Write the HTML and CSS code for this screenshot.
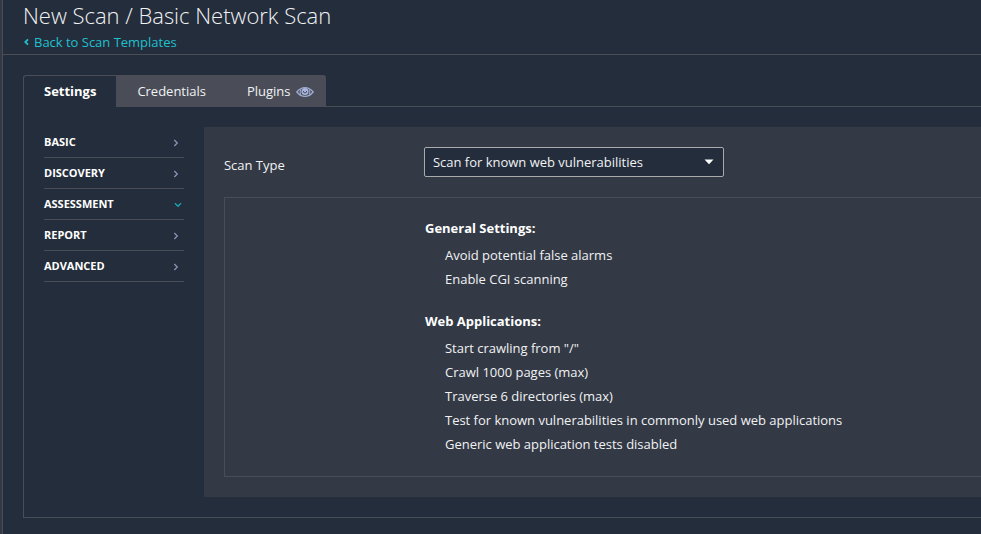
FILE: index.html
```html
<!DOCTYPE html>
<html lang="en">
<head>
<meta charset="utf-8">
<title>New Scan / Basic Network Scan</title>
<link rel="stylesheet" href="styles.css">
</head>
<body>
<div class="page">
  <header class="header">
    <h1>New Scan / Basic Network Scan</h1>
    <a class="back"><svg width="6" height="8" viewBox="0 0 6 8"><path d="M5 1.300 2.300 4l2.700 2.700"/></svg>Back to Scan Templates</a>
  </header>
  <main class="content">
    <nav class="tabs">
      <a class="tab active">Settings</a>
      <a class="tab credentials">Credentials</a>
      <a class="tab plugins">Plugins
        <svg class="eye" width="18" height="12" viewBox="0 0 18 12"><path d="M.8 6Q4.500 1.600 9 1.600T17.200 6Q13.500 10.400 9 10.400T.8 6Z" fill="none" stroke="#9eadd3" stroke-width="1.300"/><path d="M4.800 3.500Q3.200 6 4.800 8.500M13.200 3.500q1.600 2.500 0 5" fill="none" stroke="#9eadd3" stroke-width="1.100"/><circle cx="9" cy="5.500" r="3.500" fill="#a9b5da"/><path d="M7.500 5v1.200q1.500 1.600 3 0V5" fill="none" stroke="#4a4d57" stroke-width="1"/></svg>
      </a>
    </nav>
    <section class="panel">
      <ul class="side">
        <li>BASIC<svg width="6" height="8" viewBox="0 0 6 8"><path d="M1.300 1 4.300 4l-3 3"/></svg></li>
        <li>DISCOVERY<svg width="6" height="8" viewBox="0 0 6 8"><path d="M1.300 1 4.300 4l-3 3"/></svg></li>
        <li class="open">ASSESSMENT<svg width="8" height="6" viewBox="0 0 8 6"><path d="M1 1.300 4 4.300l3-3"/></svg></li>
        <li>REPORT<svg width="6" height="8" viewBox="0 0 6 8"><path d="M1.300 1 4.300 4l-3 3"/></svg></li>
        <li>ADVANCED<svg width="6" height="8" viewBox="0 0 6 8"><path d="M1.300 1 4.300 4l-3 3"/></svg></li>
      </ul>
      <div class="form">
        <div class="field">
          <span class="label">Scan Type</span>
          <div class="select">Scan for known web vulnerabilities<svg width="10" height="6" viewBox="0 0 10 6"><path d="M.5.500h9L5 5.300z"/></svg></div>
        </div>
        <div class="summary">
          <h2>General Settings:</h2>
          <ul>
            <li>Avoid potential false alarms</li>
            <li>Enable CGI scanning</li>
          </ul>
          <h2>Web Applications:</h2>
          <ul>
            <li>Start crawling from "/"</li>
            <li>Crawl 1000 pages (max)</li>
            <li>Traverse 6 directories (max)</li>
            <li>Test for known vulnerabilities in commonly used web applications</li>
            <li>Generic web application tests disabled</li>
          </ul>
        </div>
      </div>
    </section>
  </main>
</div>
</body>
</html>
```
FILE: styles.css
```css
* { box-sizing: border-box; }
body {
  margin: 0;
  height: 534px;
  overflow: hidden;
  padding-left: 2px;
  background: #333945;
  color: #f1f2f4;
  font: 13px/24px "Open Sans", sans-serif;
  letter-spacing: -.012px;
}
h1, h2, ul { margin: 0; padding: 0; list-style: none; }
.page { height: 534px; border-left: 1px solid #494d56; background: #242d3b; }
.header { height: 55px; padding-left: 20px; border-bottom: 1px solid #494d56; }
h1 { height: 32px; font-size: 22px; font-weight: 300; line-height: 30px; }
.back { display: flex; align-items: center; height: 20px; color: #1fc0cf; }
.back svg { margin-right: 5px; stroke: #1fc0cf; stroke-width: 1.8; fill: none; }
.content { padding: 20px 0 0 20px; }
.tabs { display: flex; height: 32px; line-height: 32px; position: relative; margin-bottom: -1px; }
.tab { background: #4a4d57; }
.active {
  width: 93px;
  padding-left: 20px;
  border: 1px solid #494d56;
  border-width: 1px 0 0 1px;
  border-radius: 3px 0 0 0;
  background: #242d3b;
  color: #fff;
  font-weight: 700;
  line-height: 31px;
}
.credentials { width: 110px; padding-left: 21.4px; }
.plugins { display: flex; align-items: center; width: 100px; padding-left: 21px; border-radius: 0 3px 0 0; }
.eye { margin: 1px 0 0 5px; }
.panel {
  display: flex;
  height: 412px;
  padding: 20px 0 20px 20px;
  border: 1px solid #494d56;
  border-right: 0;
}
.side { width: 140px; margin-right: 20px; color: #fff; font-size: 11px; font-weight: 700; }
.side li {
  display: flex;
  align-items: center;
  justify-content: space-between;
  height: 31px;
  padding-right: 5px;
  border-bottom: 1px solid #494d56;
}
.side li.open { padding-right: 2px; }
.side svg { margin-top: 2px; fill: none; stroke: #8994b5; stroke-width: 1.3; }
.side .open svg { stroke: #1ba9b5; }
.form { flex: 1; padding: 20px 0 20px 20px; background: #333945; }
.field { display: flex; height: 50px; }
.label { width: 200px; padding-top: 6px; }
.select {
  display: flex;
  align-items: center;
  justify-content: space-between;
  width: 300px;
  height: 30px;
  padding: 0 9px 0 8px;
  border: 1px solid #a9aaac;
  border-radius: 2px;
  background: #242d3b;
}
.select svg { fill: #fff; }
.summary {
  height: 280px;
  padding: 18px 0 0 200px;
  border: 1px solid #494d56;
  border-right: 0;
}
h2 { height: 27px; color: #fff; font-size: 13px; line-height: 24px; }
.summary ul { padding-left: 20px; }
.summary ul + h2 { margin-top: 18px; }
```
